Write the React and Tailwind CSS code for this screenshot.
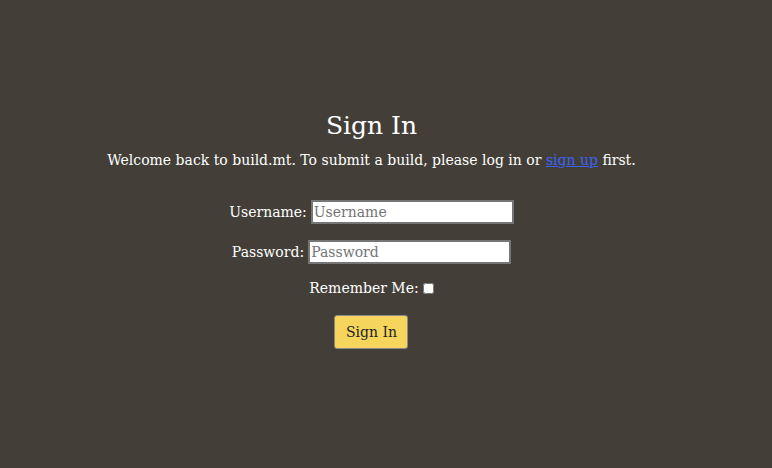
import React from 'react';

export default function App() {
  return (
    <div className="min-h-[468px] w-full bg-[#433f38] text-white flex flex-col items-center pt-[108px] pr-[29px] font-['DejaVu_Serif',serif]">
      <h1 className="text-[25px] leading-[36px]">Sign In</h1>
      <p className="text-[14px] leading-[20px] mt-[6px]">
        Welcome back to build.mt. To submit a build, please log in or{' '}
        <a href="#" className="text-[#3b63f5] underline">sign up</a> first.
      </p>
      <form className="flex flex-col items-center mt-[30px] text-[14px]">
        <div className="flex items-center h-[24px]">
          <label className="mr-[4px]">Username:</label>
          <input
            placeholder="Username"
            className="w-[203px] h-[24px] bg-white border-2 border-[#767676] px-[1px] text-black placeholder:text-[#757575] font-['DejaVu_Serif',serif] text-[14px]"
          />
        </div>
        <div className="flex items-center h-[24px] mt-[16px]">
          <label className="mr-[4px]">Password:</label>
          <input
            type="password"
            placeholder="Password"
            className="w-[203px] h-[24px] bg-white border-2 border-[#767676] px-[1px] text-black placeholder:text-[#757575] font-['DejaVu_Serif',serif] text-[14px]"
          />
        </div>
        <div className="flex items-center mt-[14px] h-[20px]">
          <label className="mr-[4px]">Remember Me:</label>
          <input type="checkbox" className="w-[11px] h-[11px] bg-white" />
        </div>
        <button
          type="button"
          className="mt-[17px] w-[74px] h-[34px] bg-[#f5d55c] border border-[#8a8a8a] rounded-[3px] text-[#222] text-[14px] font-['DejaVu_Serif',serif]"
        >
          Sign In
        </button>
      </form>
    </div>
  );
}
